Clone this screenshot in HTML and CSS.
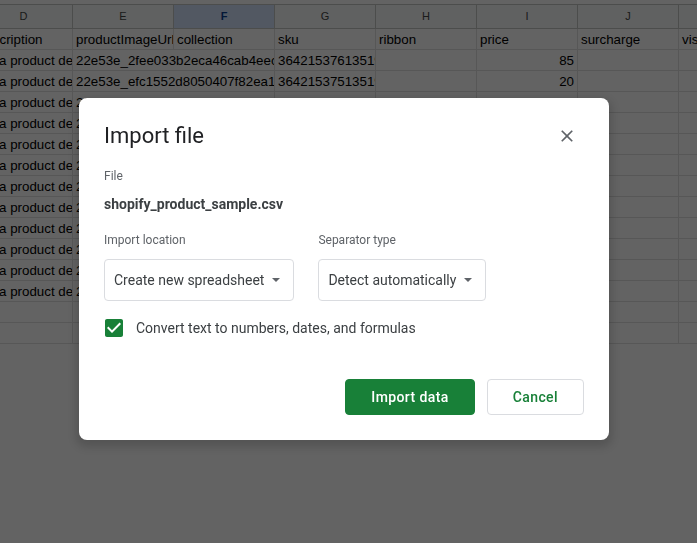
FILE: index.html
```html
<!DOCTYPE html>
<html>
  <head>
    <title>Import file</title>
    <link rel="stylesheet" href="styles.css">
  </head>

  <body>
    <div class="toolbar-edge"></div>
    <div class="grid grid-top">
      <div class="col-head">D</div>
      <div class="col-head">E</div>
      <div class="col-head selected">F</div>
      <div class="col-head">G</div>
      <div class="col-head">H</div>
      <div class="col-head">I</div>
      <div class="col-head">J</div>
      <div class="col-head">K</div>
      <div class="col-head">L</div>

      <div class="cell">description</div>
      <div class="cell">productImageUrl</div>
      <div class="cell">collection</div>
      <div class="cell">sku</div>
      <div class="cell">ribbon</div>
      <div class="cell">price</div>
      <div class="cell">surcharge</div>
      <div class="cell">visible</div>
      <div class="cell">discountMode</div>

      <div class="cell">I'm a product description.</div>
      <div class="cell wide">22e53e_2fee033b2eca46cab4eec05a~mv2.jpg</div>
      <div class="cell">364215376135191</div>
      <div class="cell"></div>
      <div class="cell num">85</div>
      <div class="cell"></div>
      <div class="cell"></div>
      <div class="cell"></div>

      <div class="cell">I'm a product description.</div>
      <div class="cell wide">22e53e_efc1552d8050407f82ea158302d0debd~mv2.jpg</div>
      <div class="cell">364215375135191</div>
      <div class="cell"></div>
      <div class="cell num">20</div>
      <div class="cell"></div>
      <div class="cell"></div>
      <div class="cell"></div>

      <div class="cell">I'm a product description.</div>
      <div class="cell wide">22e53e_8016006400904f4c9e8f2c78c7b9e2a5~mv2.jpg</div>
      <div class="cell">364115376135191</div>
      <div class="cell">Best Seller</div>
      <div class="cell num">10</div>
      <div class="cell"></div>
      <div class="cell"></div>
      <div class="cell"></div>
    </div>
    <div class="grid" id="moreRows"></div>

    <div class="scrim"></div>

    <div class="dialog">
      <div class="dialog-head">
        <h2 class="dialog-title">Import file</h2>
        <button class="close-btn" aria-label="Close">
          <svg width="20" height="20" viewBox="0 0 24 24"><path d="M19 6.41L17.59 5 12 10.590 6.41 5 5 6.41 10.59 12 5 17.59 6.41 19 12 13.41 17.59 19 19 17.59 13.41 12z"/></svg>
        </button>
      </div>

      <div class="field-label file-label">File</div>
      <div class="file-name">shopify_product_sample.csv</div>

      <div class="options">
        <div class="option">
          <div class="field-label">Import location</div>
          <div class="select">Create new spreadsheet<span class="caret"></span></div>
        </div>
        <div class="option">
          <div class="field-label">Separator type</div>
          <div class="select">Detect automatically<span class="caret"></span></div>
        </div>
      </div>

      <label class="check-row">
        <svg class="checkbox" width="24" height="24" viewBox="0 0 24 24"><path d="M19 3H5c-1.11 0-2 .9-2 2v14c0 1.1.89 2 2 2h14c1.11 0 2-.9 2-2V5c0-1.1-.89-2-2-2zm-9 14l-5-5 1.41-1.41L10 14.17l7.59-7.59L19 8l-9 9z"/></svg>
        <span>Convert text to numbers, dates, and formulas</span>
      </label>

      <div class="actions">
        <button class="btn btn-primary">Import data</button>
        <button class="btn">Cancel</button>
      </div>
    </div>

    <script>
      // rows 5-15 of the sheet: description + image url, then two blank rows
      const moreRows = document.getElementById('moreRows');
      for (let r = 0; r < 11; r++) {
        const filled = r < 9;
        for (let c = 0; c < 9; c++) {
          const cell = document.createElement('div');
          cell.className = 'cell';
          if (filled && c === 0) cell.innerText = "I'm a product description.";
          if (filled && c === 1) cell.innerText = '22e53e_' + (r * 7919 + 1021).toString(16) + 'a6c~mv2.jpg';
          moreRows.appendChild(cell);
        }
      }
    </script>
  </body>
</html>
```

FILE: styles.css
```css
:root {
  --green: #188038;
  --grid-line: #e1e1e1;
  --head-line: #c4c7c5;
  --text: #3c4043;
  --muted: #5f6368;
}

body {
  margin: 0;
  overflow: hidden;
  background: #fff;
  font-family: "Liberation Sans", Arial, sans-serif;
}

.toolbar-edge {
  height: 4px;
  border-bottom: 1px solid var(--head-line);
}

.grid {
  display: grid;
  grid-template-columns: 98px repeat(8, 101px);
  grid-auto-rows: 21px;
  margin-left: -25px;
  width: max-content;
}
.grid-top {
  grid-template-rows: 24px;
}

.col-head {
  box-sizing: border-box;
  background: #f8f9fa;
  border-right: 1px solid var(--head-line);
  border-bottom: 1px solid var(--head-line);
  color: #444746;
  font-size: 11px;
  line-height: 23px;
  text-align: center;
}
.col-head.selected {
  background: #d3e3fd;
  color: #0b3f91;
  font-weight: bold;
}

.cell {
  box-sizing: border-box;
  border-right: 1px solid var(--grid-line);
  border-bottom: 1px solid var(--grid-line);
  padding: 1px 3px 0;
  font-size: 13.33px;
  line-height: 20px;
  color: #000;
  white-space: nowrap;
  overflow: hidden;
}
.cell.wide {
  grid-column: span 2;
}
.cell.num {
  text-align: right;
}

.scrim {
  position: fixed;
  inset: 0;
  background: rgba(0, 0, 0, 0.61);
}

.dialog {
  position: absolute;
  left: 79px;
  top: 98px;
  width: 530px;
  box-sizing: border-box;
  padding: 24px 25px 25px;
  background: #fff;
  border-radius: 8px;
  box-shadow: 0 4px 8px 3px rgba(0, 0, 0, 0.15);
  font-family: Roboto, "Liberation Sans", sans-serif;
  color: var(--text);
}

.dialog-head {
  display: flex;
  align-items: center;
  justify-content: space-between;
}
.dialog-title {
  margin: 0;
  font-size: 22px;
  font-weight: 400;
  line-height: 28px;
  color: #202124;
}
.close-btn {
  border: 0;
  background: none;
  padding: 0;
  margin-right: 7px;
  display: flex;
  fill: var(--muted);
}

.field-label {
  font-size: 12px;
  line-height: 16px;
  color: var(--muted);
}
.file-label {
  margin-top: 18px;
}
.file-name {
  margin-top: 10px;
  font-size: 14px;
  font-weight: 700;
  line-height: 20px;
}

.options {
  display: flex;
  gap: 24px;
  margin-top: 18px;
}
.option {
  display: flex;
  flex-direction: column;
  align-items: flex-start;
  gap: 11px;
}
.select {
  height: 42px;
  box-sizing: border-box;
  display: flex;
  align-items: center;
  gap: 8px;
  padding: 0 13px 0 9px;
  border: 1px solid #dadce0;
  border-radius: 4px;
  font-size: 14px;
  line-height: 20px;
}
.caret {
  border-left: 4px solid transparent;
  border-right: 4px solid transparent;
  border-top: 4px solid var(--muted);
}

.check-row {
  display: flex;
  align-items: center;
  gap: 13px;
  margin-top: 17px;
  padding-left: 1px;
  font-size: 14px;
  line-height: 20px;
}
.checkbox {
  margin: -3px;
  fill: var(--green);
}

.actions {
  display: flex;
  justify-content: flex-end;
  gap: 12px;
  margin-top: 41px;
}
.btn {
  height: 36px;
  padding: 0 25px;
  border: 1px solid #dadce0;
  border-radius: 4px;
  background: #fff;
  color: var(--green);
  font-family: Roboto, "Liberation Sans", sans-serif;
  font-size: 14px;
  font-weight: 500;
  letter-spacing: 0.4px;
}
.btn-primary {
  background: var(--green);
  border-color: var(--green);
  color: #fff;
}
```
